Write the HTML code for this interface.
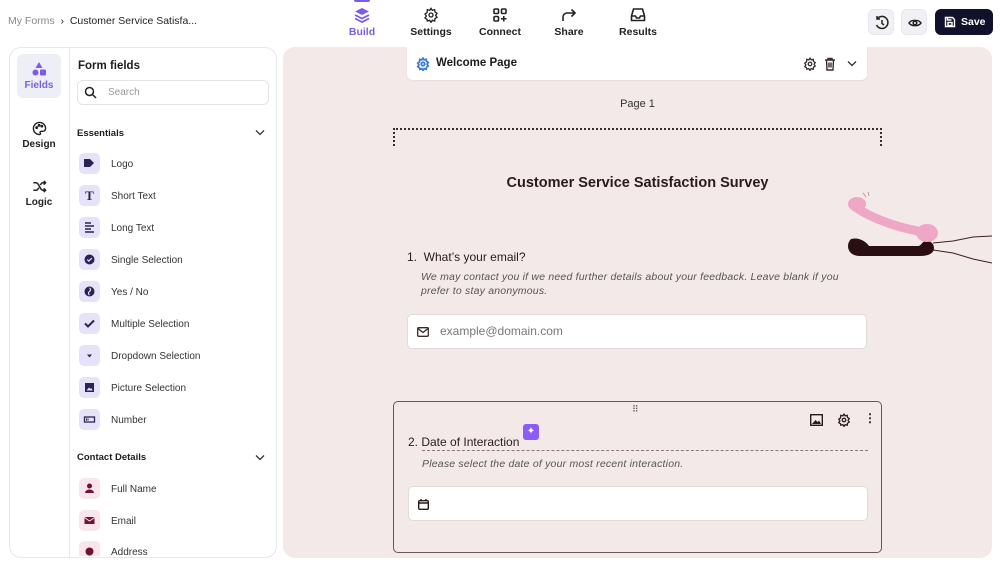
<!DOCTYPE html>
<html><head><meta charset="utf-8"><style>
*{box-sizing:border-box;margin:0;padding:0}
body{width:1000px;height:566px;background:#fff;font-family:"Liberation Sans",sans-serif;position:relative;overflow:hidden;color:#1f1a1c}
.abs{position:absolute}
.bc{left:8px;top:15px;font-size:10.5px;color:#222}
.bc span{color:#888}
.nav{top:0;text-align:center;font-size:10.5px;font-weight:bold;color:#222;width:60px}
.nav svg{display:block;margin:7px auto 3px}
.btn{top:9px;width:26px;height:26px;border-radius:6px;background:#f1f1f5;border:1px solid #e6e6ee}
.left{left:9px;top:47px;width:268px;height:511px;border:1px solid #e6e6ee;border-radius:12px;overflow:hidden}
.rail{left:0;top:0;width:60px;height:100%;border-right:1px solid #e6e6ee}
.ri{position:absolute;left:7px;width:44px;text-align:center;font-size:10px;font-weight:bold;color:#222}
.item{position:absolute;left:69px;font-size:10px;color:#333}
.ic{position:absolute;left:0;top:-6px;width:21px;height:21px;border-radius:5px;background:#e7e2fb}
.ic.p{background:#fbe5ec}
.item .t{position:absolute;left:32px;top:0;white-space:nowrap}
.canvas{left:283px;top:47px;width:709px;height:511px;background:#f4e9e9;border-radius:12px;overflow:hidden}
.chev{position:absolute}
</style></head><body>
<div class="abs bc"><span>My Forms</span> &nbsp;›&nbsp; Customer Service Satisfa...</div>
<div class="abs" style="left:354px;top:0;width:16px;height:2px;background:#7c5ce6;border-radius:0 0 2px 2px"></div>
<div class="abs nav" style="left:332px;color:#7c5ce6"><svg width="16" height="16" viewBox="0 0 16 16"><path d="M8 1L15 4.5 8 8 1 4.5Z" fill="#7c5ce6"/><path d="M1 8l7 3.5L15 8M1 11.5l7 3.5 7-3.5" stroke="#7c5ce6" stroke-width="1.8" fill="none"/></svg>Build</div>
<div class="abs nav" style="left:401px"><svg width="16" height="16" viewBox="0 0 24 24" fill="none" stroke="#222" stroke-width="2"><circle cx="12" cy="12" r="3"/><path d="M12 2l2 3 3.5-1 .5 3.5 3 2-2 3 2 3-3 2-.5 3.5-3.5-1-2 3-2-3-3.5 1L6 18.5l-3-2 2-3-2-3 3-2L6.5 4 10 5z"/></svg>Settings</div>
<div class="abs nav" style="left:470px"><svg width="16" height="16" viewBox="0 0 16 16" fill="none" stroke="#222" stroke-width="1.6"><rect x="2" y="2" width="4.5" height="4.5" rx="1"/><rect x="9.5" y="2" width="4.5" height="4.5" rx="1"/><rect x="2" y="9.5" width="4.5" height="4.5" rx="1"/><path d="M11.75 9v5.5M9 11.75h5.5"/></svg>Connect</div>
<div class="abs nav" style="left:539px"><svg width="16" height="16" viewBox="0 0 16 16" fill="none" stroke="#222" stroke-width="1.6"><path d="M2 14V10a4 4 0 014-4h8M10.5 2.5L14 6l-3.5 3.5"/></svg>Share</div>
<div class="abs nav" style="left:608px"><svg width="16" height="16" viewBox="0 0 16 16" fill="none" stroke="#222" stroke-width="1.6"><path d="M3.5 2h9l2 7v4.5H1.5V9zM1.5 9h4l1 2h3l1-2h4"/></svg>Results</div>
<div class="abs btn" style="left:868px"><svg width="26" height="26" viewBox="0 0 26 26" fill="none" stroke="#222" stroke-width="1.5"><path d="M8 9a6 6 0 11-.5 6M8 6v3h3M13 10v3.5l2 1.5"/></svg></div>
<div class="abs btn" style="left:901px"><svg width="26" height="26" viewBox="0 0 26 26" fill="none" stroke="#222" stroke-width="1.5"><path d="M7 13c2-3.5 10-3.5 12 0-2 3.5-10 3.5-12 0z"/><circle cx="13" cy="13" r="1.8"/></svg></div>
<div class="abs" style="left:935px;top:9px;width:58px;height:26px;border-radius:6px;background:#12112b;color:#fff;font-size:10.5px;font-weight:bold;line-height:26px;padding-left:26px"><svg class="abs" style="left:9px;top:7px" width="12" height="12" viewBox="0 0 12 12" fill="none" stroke="#fff" stroke-width="1.4"><path d="M1.5 1.5h7l2 2v7h-9z"/><rect x="4" y="6.5" width="4" height="3"/><path d="M3.5 1.5v2.5h4"/></svg>Save</div>

<div class="abs left">
 <div class="abs rail">
  <div class="ri" style="top:6px;height:44px;background:#eeeef7;border-radius:6px;color:#7c5ce6;padding-top:8px"><svg width="16" height="14" viewBox="0 0 16 14"><path d="M8 0l3.5 6h-7z" fill="#7c5ce6"/><circle cx="4.5" cy="10.5" r="3" fill="#7c5ce6"/><rect x="9" y="7.5" width="6" height="6" rx="1" fill="#7c5ce6"/></svg><div style="margin-top:1px">Fields</div></div>
  <div class="ri" style="top:73px"><svg width="15" height="15" viewBox="0 0 16 16" fill="none" stroke="#222" stroke-width="1.5"><path d="M8 1.5a6.5 6.5 0 100 13c1 0 1.3-.8.8-1.6-.5-.8 0-1.9 1-1.9h1.7a3 3 0 003-3C14.5 4.3 11.6 1.5 8 1.5z"/><circle cx="5" cy="7" r=".8"/><circle cx="7.5" cy="4.6" r=".8"/><circle cx="10.5" cy="5.5" r=".8"/></svg><div>Design</div></div>
  <div class="ri" style="top:131px"><svg width="15" height="15" viewBox="0 0 16 16" fill="none" stroke="#222" stroke-width="1.6"><path d="M1.5 4h3c3 0 4 8 7 8h3M1.5 12h3c1.2 0 2-1.2 2.7-2.7M9 6.5C9.7 5 10.5 4 11.5 4h3M12.5 2l2 2-2 2M12.5 10l2 2-2 2"/></svg><div>Logic</div></div>
 </div>
 <div class="abs" style="left:68px;top:12px;font-size:11.5px;font-weight:bold">Form fields</div>
 <div class="abs" style="left:67px;top:32px;width:192px;height:25px;border:1px solid #e3e3ea;border-radius:6px;font-size:10px;color:#999;line-height:23px;padding-left:30px"><svg class="abs" style="left:6px;top:5px" width="13" height="13" viewBox="0 0 13 13" fill="none" stroke="#222" stroke-width="1.5"><circle cx="5.5" cy="5.5" r="4"/><path d="M8.5 8.5L12 12"/></svg>Search</div>
 <div class="abs" style="left:67px;top:80px;font-size:9.5px;font-weight:bold">Essentials</div>
</div>
<svg class="chev" style="left:255px;top:129px" width="10" height="7" viewBox="0 0 10 7" fill="none" stroke="#333" stroke-width="1.3"><path d="M1 1.5l4 4 4-4"/></svg>
<svg class="chev" style="left:255px;top:454px" width="10" height="7" viewBox="0 0 10 7" fill="none" stroke="#333" stroke-width="1.3"><path d="M1 1.5l4 4 4-4"/></svg>
<div class="item" style="left:79px;top:159px"><div class="ic"><svg width="21" height="21" viewBox="0 0 21 21"><path d="M5 6h6l4 4-4 4H5z" fill="#2a2550"/></svg></div><div class="t">Logo</div></div>
<div class="item" style="left:79px;top:191px"><div class="ic" style="text-align:center;font:bold 13px 'Liberation Serif';color:#2a2550;line-height:21px">T</div><div class="t">Short Text</div></div>
<div class="item" style="left:79px;top:223px"><div class="ic"><svg width="21" height="21" viewBox="0 0 21 21" stroke="#2a2550" stroke-width="1.4"><path d="M6 6h6M6 9h9M6 12h6M6 15h9"/></svg></div><div class="t">Long Text</div></div>
<div class="item" style="left:79px;top:255px"><div class="ic"><svg width="21" height="21" viewBox="0 0 21 21"><circle cx="10.5" cy="10.5" r="5" fill="#2a2550"/><path d="M8.3 10.6l1.5 1.5 3-3" stroke="#e7e2fb" stroke-width="1.2" fill="none"/></svg></div><div class="t">Single Selection</div></div>
<div class="item" style="left:79px;top:287px"><div class="ic"><svg width="21" height="21" viewBox="0 0 21 21"><circle cx="10.5" cy="10.5" r="5" fill="#2a2550"/><path d="M10.5 7a2 2 0 010 3.5 2 2 0 000 3.5" stroke="#e7e2fb" stroke-width="1.2" fill="none"/></svg></div><div class="t">Yes / No</div></div>
<div class="item" style="left:79px;top:319px"><div class="ic"><svg width="21" height="21" viewBox="0 0 21 21"><path d="M6 10.5l3 3 6-6" stroke="#2a2550" stroke-width="2" fill="none"/></svg></div><div class="t">Multiple Selection</div></div>
<div class="item" style="left:79px;top:351px"><div class="ic"><svg width="21" height="21" viewBox="0 0 21 21"><path d="M8 9.5h5l-2.5 3z" fill="#2a2550"/></svg></div><div class="t">Dropdown Selection</div></div>
<div class="item" style="left:79px;top:383px"><div class="ic"><svg width="21" height="21" viewBox="0 0 21 21"><rect x="6" y="6" width="9" height="9" fill="#2a2550"/><path d="M7.5 13.5l2.5-3 1.5 1.5 1-1 1 2.5z" fill="#e7e2fb"/></svg></div><div class="t">Picture Selection</div></div>
<div class="item" style="left:79px;top:415px"><div class="ic"><svg width="21" height="21" viewBox="0 0 21 21"><rect x="5.5" y="8" width="10" height="5" fill="none" stroke="#2a2550" stroke-width="1.3"/><path d="M7.5 9.5v2M9 9.5v2" stroke="#2a2550"/></svg></div><div class="t">Number</div></div>
<div class="abs" style="left:77px;top:452px;font-size:9.5px;font-weight:bold">Contact Details</div>
<div class="item" style="left:79px;top:484px"><div class="ic p"><svg width="21" height="21" viewBox="0 0 21 21" fill="#6b1530"><circle cx="10.5" cy="8" r="2.5"/><path d="M6 15a4.5 3.5 0 019 0z"/></svg></div><div class="t">Full Name</div></div>
<div class="item" style="left:79px;top:516px"><div class="ic p"><svg width="21" height="21" viewBox="0 0 21 21"><rect x="5.5" y="7" width="10" height="7" fill="#6b1530"/><path d="M5.5 7.5l5 3.5 5-3.5" stroke="#fbe5ec" fill="none"/></svg></div><div class="t">Email</div></div>
<div class="abs" style="left:79px;top:541px;width:190px;height:15px;overflow:hidden"><div class="ic p" style="top:0"><svg width="21" height="21"><circle cx="10.5" cy="10.5" r="4" fill="#6b1530"/></svg></div><div class="abs" style="left:32px;top:6px;font-size:10px;color:#333">Address</div></div>

<div class="abs canvas">
 <div class="abs" style="left:124px;top:0;width:460px;height:33px;background:#fff;border-radius:0 0 6px 6px;box-shadow:0 1px 2px rgba(0,0,0,.06)">
  <svg class="abs" style="left:9px;top:10px" width="14" height="14" viewBox="0 0 24 24" fill="none" stroke="#3a7bd5" stroke-width="3"><circle cx="12" cy="12" r="3"/><path d="M12 2l2 3 3.5-1 .5 3.5 3 2-2 3 2 3-3 2-.5 3.5-3.5-1-2 3-2-3-3.5 1L6 18.5l-3-2 2-3-2-3 3-2L6.5 4 10 5z"/></svg>
  <div class="abs" style="left:29px;top:10px;font-size:11.5px;font-weight:bold">Welcome Page</div>
  <svg class="abs" style="left:396px;top:10px" width="14" height="14" viewBox="0 0 24 24" fill="none" stroke="#3a2a2a" stroke-width="2.2"><circle cx="12" cy="12" r="3"/><path d="M12 2l2 3 3.5-1 .5 3.5 3 2-2 3 2 3-3 2-.5 3.5-3.5-1-2 3-2-3-3.5 1L6 18.5l-3-2 2-3-2-3 3-2L6.5 4 10 5z"/></svg>
  <svg class="abs" style="left:417px;top:10px" width="12" height="14" viewBox="0 0 12 14" fill="none" stroke="#3a2a2a" stroke-width="1.4"><path d="M1 3h10M4 3V1.5h4V3M2.5 3l.5 10h6l.5-10M5 5.5v5M7 5.5v5"/></svg>
  <svg class="abs" style="left:440px;top:13px" width="10" height="7" viewBox="0 0 10 7" fill="none" stroke="#3a2a2a" stroke-width="1.3"><path d="M1 1.5l4 4 4-4"/></svg>
 </div>
 <div class="abs" style="left:0;width:709px;top:51px;text-align:center;font-size:11px;color:#333">Page 1</div>
 <div class="abs" style="left:110px;top:81px;width:489px;height:18px;border:2px dotted #3a2a2a;border-bottom:none"></div>
 <div class="abs" style="left:0;width:709px;top:128px;text-align:center;font-size:14.5px;font-weight:bold;color:#2a1a1e">Customer Service Satisfaction Survey</div>
 <svg class="abs" style="left:560px;top:140px" width="150" height="90" viewBox="0 0 150 90">
  <path d="M90 56 L110 54 130 50 149 49" stroke="#3a2020" fill="none"/>
  <path d="M90 63 L110 66 130 72 149 76" stroke="#3a2020" fill="none"/>
  <path d="M8 52c-6 6-3 17 9 17h60c9 0 14-3 14-8s-5-8-9-7c-3 1-4 5-7 5H26c-3-4-9-9-18-7z" fill="#2a0f10"/>
  <path d="M12 20c18 12 45 22 75 26" stroke="#eea8c6" stroke-width="9" stroke-linecap="round" fill="none"/>
  <ellipse cx="14" cy="17" rx="9" ry="7" fill="#eea8c6"/>
  <ellipse cx="84" cy="46" rx="11" ry="9" fill="#eea8c6"/>
  <path d="M20 6l3 4M25 5l1 4" stroke="#b88" stroke-width=".8"/>
 </svg>
 <div class="abs" style="left:124px;top:203px;font-size:12px;color:#2a1a1e">1.&nbsp; What’s your email?</div>
 <div class="abs" style="left:138px;top:223px;width:436px;font-size:10.5px;font-style:italic;color:#555;line-height:14px;letter-spacing:.2px">We may contact you if we need further details about your feedback. Leave blank if you prefer to stay anonymous.</div>
 <div class="abs" style="left:124px;top:267px;width:460px;height:35px;background:#fff;border:1px solid #e2dada;border-radius:5px;font-size:12px;color:#777;line-height:33px;padding-left:32px"><svg class="abs" style="left:9px;top:12px" width="12" height="10" viewBox="0 0 12 10" fill="none" stroke="#3a2a2a" stroke-width="1.3"><rect x=".7" y=".7" width="10.6" height="8.6" rx="1"/><path d="M1 1.5l5 4 5-4"/></svg>example@domain.com</div>
 <div class="abs" style="left:110px;top:354px;width:489px;height:152px;border:1.3px solid #6b5555;border-radius:5px">
  <div class="abs" style="left:238px;top:2px;font-size:9px;letter-spacing:-1px;color:#555">⠿</div>
  <svg class="abs" style="left:416px;top:12px" width="13" height="12" viewBox="0 0 13 12"><rect x=".7" y=".7" width="11.6" height="10.6" fill="none" stroke="#2a1a1a" stroke-width="1.4"/><path d="M2 10l3.5-4 2 2 1.5-1.5L11 10z" fill="#2a1a1a"/></svg>
  <svg class="abs" style="left:443px;top:11px" width="14" height="14" viewBox="0 0 24 24" fill="none" stroke="#2a1a1a" stroke-width="2.2"><circle cx="12" cy="12" r="3"/><path d="M12 2l2 3 3.5-1 .5 3.5 3 2-2 3 2 3-3 2-.5 3.5-3.5-1-2 3-2-3-3.5 1L6 18.5l-3-2 2-3-2-3 3-2L6.5 4 10 5z"/></svg>
  <div class="abs" style="left:470px;top:9px;font-size:12px;font-weight:bold;color:#2a1a1a">⋮</div>
  <div class="abs" style="left:14px;top:33px;font-size:12px;color:#2a1a1e">2. Date of Interaction</div>
  <div class="abs" style="left:28px;top:48px;width:446px;border-top:1px dashed #8a7a7a"></div>
  <div class="abs" style="left:129px;top:22px;width:16px;height:16px;background:#8b5cf6;border-radius:3px;color:#fff;font-size:10px;text-align:center;line-height:16px">✦</div>
  <div class="abs" style="left:28px;top:56px;font-size:10.5px;font-style:italic;color:#555;letter-spacing:.2px">Please select the date of your most recent interaction.</div>
  <div class="abs" style="left:14px;top:84px;width:460px;height:35px;background:#fff;border:1px solid #e2dada;border-radius:5px"><svg class="abs" style="left:9px;top:12px" width="11" height="11" viewBox="0 0 11 11" fill="none" stroke="#2a1a1a" stroke-width="1.4"><rect x=".7" y="1.7" width="9.6" height="8.6" rx="1"/><path d="M.7 4h9.6M3 0v2M8 0v2"/></svg></div>
 </div>
</div>
</body></html>
